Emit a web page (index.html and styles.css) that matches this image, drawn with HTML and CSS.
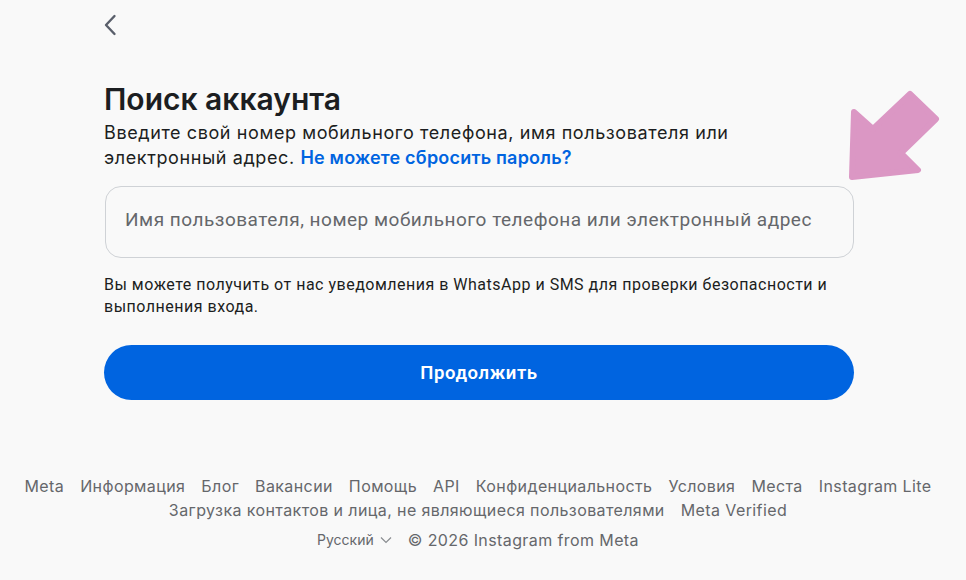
FILE: index.html
```html
<!DOCTYPE html>
<html lang="ru">
<head>
<meta charset="utf-8">
<link rel="stylesheet" href="styles.css">
</head>
<body>
<div class="page">
  <header class="topbar">
    <a class="back" aria-label="Назад">
      <svg width="14" height="22" viewBox="0 0 14 22"><path d="M11.5 2 L3 11 L11.5 20" fill="none" stroke="#5a5f6b" stroke-width="2.4" stroke-linecap="round" stroke-linejoin="round"/></svg>
    </a>
  </header>
  <main class="main">
    <h1 class="title">Поиск аккаунта</h1>
    <p class="subtitle">Введите свой номер мобильного телефона, имя пользователя или электронный адрес. <a class="link">Не можете сбросить пароль?</a></p>
    <div class="field-wrap">
      <div class="field">Имя пользователя, номер мобильного телефона или электронный адрес</div>
      <svg class="arrow" width="100" height="100" viewBox="0 0 100 100"><polygon points="5,26 24,43 61,8 87,33 52,67 69,84 3,91" fill="#db97c4" stroke="#db97c4" stroke-width="6" stroke-linejoin="round"/></svg>
    </div>
    <p class="note">Вы можете получить от нас уведомления в WhatsApp и SMS для проверки безопасности и выполнения входа.</p>
    <button class="btn">Продолжить</button>
  </main>
  <footer class="footer">
    <nav class="links">
      <a>Meta</a><a>Информация</a><a>Блог</a><a>Вакансии</a><a>Помощь</a><a>API</a><a>Конфиденциальность</a><a>Условия</a><a>Места</a><a>Instagram Lite</a>
    </nav>
    <nav class="links">
      <a>Загрузка контактов и лица, не являющиеся пользователями</a><a>Meta Verified</a>
    </nav>
    <div class="bottom">
      <span class="lang">Русский <svg width="12" height="8" viewBox="0 0 12 8"><path d="M1 1.5 L6 6.5 L11 1.5" fill="none" stroke="#8a8d91" stroke-width="1.2"/></svg></span>
      <span>© 2026 Instagram from Meta</span>
    </div>
  </footer>
</div>
</body>
</html>
```
FILE: styles.css
```css
* { box-sizing: border-box; }
html, body { margin: 0; padding: 0; }
body {
  background: #f9f9f9;
  font-family: Inter, "Noto Sans", sans-serif;
  color: #1c1e21;
  width: 966px;
  height: 580px;
  overflow: hidden;
}
.page { width: 966px; }
.topbar { padding: 14px 0 0 103px; height: 78px; }
.back { display: inline-block; width: 14px; height: 22px; }
.main { width: 750px; margin-left: 104px; }
.title {
  margin: 0;
  font-size: 30px;
  font-weight: 600;
  line-height: 42px;
  color: #1c1e21;
  letter-spacing: 0;
}
.subtitle {
  margin: 0;
  max-width: 735px;
  font-size: 18px;
  line-height: 25px;
  letter-spacing: 0.6px;
  color: #1c1e21;
}
.link { color: #0064e0; font-weight: 600; letter-spacing: 0.2px; }
.field-wrap { position: relative; margin-top: 16px; }
.field {
  height: 72px;
  margin-left: 1px;
  border: 1px solid #cfd2d6;
  border-radius: 16px;
  padding: 0 19px 6px;
  display: flex;
  align-items: center;
  font-family: Roboto, sans-serif;
  font-size: 19px;
  letter-spacing: 0.5px;
  color: #65676b;
  background: #f9f9f9;
}
.arrow { position: absolute; left: 745px; top: -100px; }
.note {
  margin: 16px 0 0;
  font-family: Roboto, sans-serif;
  font-size: 16px;
  letter-spacing: 0.5px;
  line-height: 22px;
  color: #1c1e21;
}
.btn {
  display: block;
  width: 750px;
  height: 55px;
  margin-top: 27px;
  border: 0;
  border-radius: 28px;
  background: #0064e0;
  color: #fff;
  font-family: Roboto, sans-serif;
  font-size: 18.5px;
  letter-spacing: 0.6px;
  font-weight: 600;
}
.footer {
  margin-top: 74px;
  width: 956px;
  display: flex;
  flex-direction: column;
  align-items: center;
  color: #65676b;
  font-size: 16px;
  letter-spacing: 0.4px;
}
.links { display: flex; gap: 16px; line-height: 24px; }
.bottom {
  display: flex;
  gap: 16px;
  margin-top: 6px;
  line-height: 24px;
}
.lang { font-size: 14px; letter-spacing: 0; display: flex; align-items: center; gap: 6px; color: #65676b; }
```
